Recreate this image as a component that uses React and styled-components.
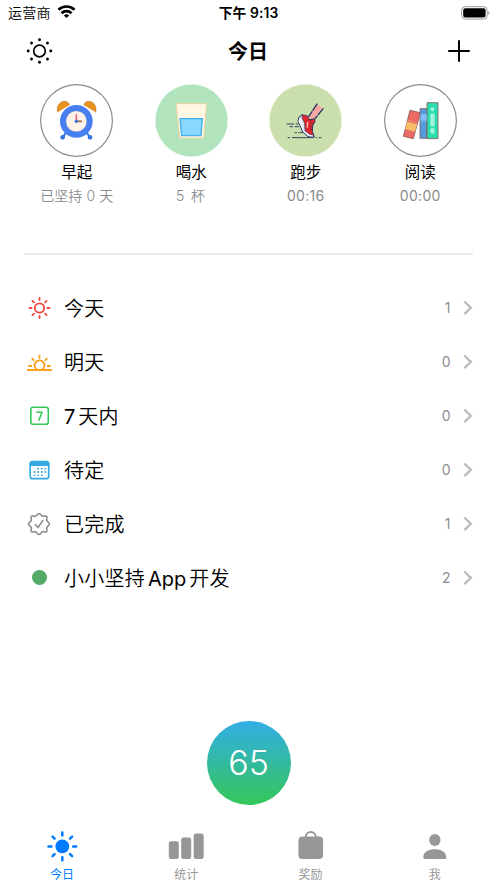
import React from "react";
import styled, { createGlobalStyle } from "styled-components";

const GlobalStyle = createGlobalStyle`
  * { box-sizing: border-box; }
  body { margin: 0; background: #fff; font-family: Inter, "Noto Sans CJK SC", sans-serif; color: #000; }
  svg { display: block; flex: none; overflow: visible; }
`;

const Screen = styled.main`
  width: 497px; height: 883px; display: flex; flex-direction: column; background: #fff; overflow: hidden;
`;
const StatusBar = styled.div`
  height: 26px; padding: 0 7px 0 8px; display: grid; grid-template-columns: 1fr auto 1fr; align-items: center;
  font-size: 14px; line-height: 26px; letter-spacing: 0.3px;
`;
const Carrier = styled.div`display: flex; align-items: center; gap: 6px; font-weight: 350;`;
const Clock = styled.div`font-weight: 600; font-size: 13.8px; letter-spacing: 0.1px; margin-right: 1px;`;
const BatterySlot = styled.div`display: flex; justify-content: flex-end; padding-bottom: 1px;`;
const NavBar = styled.header`
  height: 50px; padding: 0 27px 0 26px; display: grid; grid-template-columns: 1fr auto 1fr; align-items: center;
`;
const NavTitle = styled.h1`margin: 0; padding-top: 2px; font-size: 20px; line-height: 48px; font-weight: 600;`;
const NavEnd = styled.div`display: flex; justify-content: flex-end;`;

const Habits = styled.section`
  height: 177px; padding: 7.500px 19.500px 0 19.500px; display: grid; grid-template-columns: repeat(4, 1fr); align-items: start;
`;
const Habit = styled.div`display: flex; flex-direction: column; align-items: center;`;
const HabitCircle = styled.div`
  width: 73px; height: 73px; border-radius: 50%; background: ${(p) => p.$fill || "#fff"};
  box-shadow: ${(p) => (p.$fill ? "inset 0 0 0 .5px #fff" : "inset 0 0 0 1.2px #8b8b8b")};
`;
const HabitName = styled.div`margin-top: 4px; font-size: 15.5px; line-height: 24px;`;
const HabitInfo = styled.div`
  margin-top: -0.5px; font-size: 14px; line-height: 24px; font-weight: ${(p) => p.$weight || 400}; color: #8a8a8d;
  letter-spacing: ${(p) => p.$spacing || "0.3px"};
`;
const Divider = styled.hr`
  width: 449px; height: 2px; margin: 0 0 26px 24px; border: 0; background: #ececec; flex: none;
`;

const List = styled.nav`display: flex; flex-direction: column;`;
const Row = styled.div`height: 54px; padding: 0 25px 0 25px; display: flex; align-items: center;`;
const RowIcon = styled.div`width: 28px; height: 28px; flex: none;`;
const RowTitle = styled.div`
  margin-left: 11px; padding-top: 2px; flex: 1; display: flex; gap: 3px; font-size: 20px; line-height: 30px;
  font-weight: 350; letter-spacing: 0.25px;
`;
const Latin = styled.span`font-weight: 400; letter-spacing: 0;`;
const RowCount = styled.div`font-size: 14px; color: #8e8e91; margin-right: 12.5px; padding-bottom: 1px;`;
const Dot = styled.div`width: 15px; height: 15px; margin: 6px 7px; border-radius: 50%; background: #56aa68;`;

const ScoreArea = styled.div`flex: 1; display: flex; align-items: flex-end; justify-content: center; padding-bottom: 16.5px;`;
const Score = styled.div`
  width: 84px; height: 84px; border-radius: 50%; background: linear-gradient(#32ade6, #34c759);
  color: #fff; font-size: 34px; line-height: 84px; font-weight: 300; text-align: center;
`;
const TabBar = styled.footer`height: 62px; display: grid; grid-template-columns: repeat(4, 1fr);`;
const Tab = styled.div`
  display: flex; flex-direction: column; align-items: center; padding-top: 9px;
  color: ${(p) => (p.$active ? "#007aff" : "#979797")};
`;
const TabLabel = styled.div`margin-top: 4px; font-size: 12px; line-height: 18px;`;

const Rays = ({ inner, outer, cx = 14, cy = 14, angles = [0, 45, 90, 135, 180, 225, 270, 315] }) =>
  angles.map((a) => (
    <path key={a} transform={`rotate(${a} ${cx} ${cy})`} d={`M${cx + inner} ${cy}H${cx + outer}`} />
  ));

const Wifi = () => (
  <svg width="19" height="16" viewBox="0 0 19 16">
    <g fill="none" stroke="#000" strokeWidth="2.7">
      <path d="M1.5 4.8a11.3 11.3 0 0 1 16 0" />
      <path d="M4.5 8.2a7.1 7.1 0 0 1 10 0" />
    </g>
    <path d="M9.5 13 6.8 10.4a4 4 0 0 1 5.4 0Z" fill="#000" />
  </svg>
);
const Battery = () => (
  <svg width="29" height="14" viewBox="0 0 29 14">
    <rect x=".6" y=".7" width="25.6" height="12.4" rx="3.6" fill="none" stroke="#999" />
    <rect x="2.2" y="2.3" width="22.4" height="9.2" rx="2" fill="#000" />
    <path d="M27.4 5v4c1.5-.6 1.5-3.4 0-4Z" fill="#999" />
  </svg>
);
const DottedSun = () => (
  <svg width="27" height="28" viewBox="0 0 28 28">
    <circle cx="14" cy="14" r="6" fill="none" stroke="#000" strokeWidth="1.8" />
    {[0, 45, 90, 135, 180, 225, 270, 315].map((a) => (
      <circle key={a} cx="25.7" cy="14" r="1.5" transform={`rotate(${a} 14 14)`} />
    ))}
  </svg>
);
const Plus = () => (
  <svg width="22" height="22" viewBox="0 0 22 22">
    <path d="M11 1v20M1 11h20" stroke="#000" strokeWidth="2" strokeLinecap="round" />
  </svg>
);

const art = { width: 73, height: 73, viewBox: "30 23 219 219" };
const ClockArt = () => (
  <svg {...art}>
    <path d="M83 108c-5-18 6-33 21-33 9 0 14 6 14 12M197 108c5-18-6-33-21-33-9 0-14 6-14 12" fill="#e9921f" stroke="#ad6b36" strokeWidth="1.5" />
    <path d="m108 169-10 14M170 169l10 14" stroke="#3674e8" strokeWidth="6" />
    <circle cx="98" cy="183" r="7" fill="#3674e8" /><circle cx="180" cy="183" r="7" fill="#3674e8" />
    <circle cx="139" cy="135" r="49" fill="#477ff0" />
    <circle cx="139" cy="135" r="32" fill="#fff2e8" stroke="#356cda" strokeWidth="2" />
    <path d="M139 134v-20" stroke="#ed6674" strokeWidth="5" />
    <path d="M139 135h17" stroke="#9e633f" strokeWidth="5" />
    <circle cx="139" cy="135" r="5" fill="#3674e8" />
  </svg>
);
const GlassArt = () => (
  <svg {...art}>
    <path d="M93 82h92l-9 103h-72Z" fill="#fff7e3" stroke="#eed39d" strokeWidth="3" strokeLinejoin="round" />
    <path d="M105 127h67l-4 51h-58Z" fill="#8ad7ff" stroke="#3eb1f2" strokeWidth="4" />
  </svg>
);
const ShoeArt = () => (
  <svg {...art} viewBox="28 23 219 219">
    <path d="m170 83-25 39 13 13 33-39Z" fill="#f7aaa5" />
    <path d="m173 82-27 40m45-26-31 39" fill="none" stroke="#24355a" strokeWidth="4" strokeDasharray="26 2" />
    <path d="m128 115-10 7-3 12 14 33 16 14 19 1-6-16 1-19 7-12-3-7-19 3Z" fill="#e3e5f2" stroke="#24355a" strokeWidth="3" strokeLinejoin="round" />
    <path d="m129 115 14 3 7 14 14-4 2 8-7 11-1 18 4 12-12-3-14-11-1-22-8-17Z" fill="#e3262b" stroke="#24355a" strokeWidth="2" strokeLinejoin="round" />
    <path d="m120 126 5 10 5 26-13-27Z" fill="#f8f8fc" />
    <path d="m135 167 13 11 11 1" stroke="#f8f8fc" strokeWidth="3" fill="none" />
    <path d="m144 138-1 14" stroke="#ffc4c0" strokeWidth="4" strokeLinecap="round" />
    <path d="m153 141 7 1m-8 8 6 1m-6 8h6" stroke="#26365a" strokeWidth="2" />
    <path d="M81 143h22m5 0h8M90 151h10m5 0h13M105 169h7m4 0h14M84 184h7m6 0h66m5 0h4m5 0h8" stroke="#2e4267" strokeWidth="3" />
  </svg>
);
const BooksArt = () => (
  <svg {...art} viewBox="41 23 219 219">
    <g stroke="#885b59" strokeWidth="2.5" strokeLinejoin="round">
      <path d="m119 102 31 7-21 78-30-7Z" fill="#ed6a64" />
      <path d="M149 97h21v89h-21Z" fill="#559bdc" />
      <path d="M170 79h33v108h-33Z" fill="#29deb0" />
    </g>
    <path d="m110 136 30 8-6 22-30-8Z" fill="#f7bd69" />
    <path d="m112 132 29 8" stroke="#f0a77f" strokeWidth="2" />
    <path d="M151 113h18v20h-18Z" fill="#80bcf6" /><path d="M151 137h18" stroke="#80bcf6" strokeWidth="2" />
    <rect x="180" y="111" width="13" height="40" rx="6" fill="#a0f5da" />
    <circle cx="186" cy="99" r="6" fill="#a0f5da" /><rect x="180" y="155" width="13" height="17" rx="6" fill="#a0f5da" />
  </svg>
);

const line = { width: 28, height: 28, viewBox: "0 0 28 28", fill: "none", strokeLinecap: "round", strokeLinejoin: "round" };
const TodayIcon = () => (
  <svg {...line} stroke="#f2473f" strokeWidth="1.8">
    <circle cx="14.5" cy="14" r="4.7" /><Rays cx={14.5} inner={7.9} outer={10} />
  </svg>
);
const TomorrowIcon = () => (
  <svg {...line} stroke="#f99d16" strokeWidth="1.8">
    <path d="M2.8 22H26.2M11.700 21.500a5 5 0 1 1 5.600 0" />
    <Rays cx={14.5} cy={18} inner={8.2} outer={10.3} angles={[0, 180, 225, 270, 315]} />
  </svg>
);
const WeekIcon = () => (
  <svg {...line} stroke="#34c759" strokeWidth="1.6">
    <rect x="5.8" y="5.3" width="17.5" height="17" rx="2.3" />
    <path d="M12 10.300h5l-3 7.700" />
  </svg>
);
const CalendarIcon = () => (
  <svg {...line}>
    <rect x="5.2" y="5.7" width="18.5" height="17" rx="2.5" stroke="#36a9e1" strokeWidth="1.7" />
    <path d="M4.5 10V8a3 3 0 0 1 3-3h14a3 3 0 0 1 3 3v2Z" fill="#36a9e1" />
    <path d="M13 12.700h8.300M9.500 16h11.800M9.500 19.300h8.300" stroke="#36a9e1" strokeWidth="1.8" strokeDasharray=".1 3.5" />
  </svg>
);
const DoneIcon = () => (
  <svg {...line} stroke="#8e8e91" strokeWidth="1.6">
    <path d="M14 3.500c1.500 0 2 2.200 3.400 2.700 1.500.5 3.500-.7 4.300.1.800.8-.4 2.800.1 4.300.5 1.400 2.700 1.900 2.700 3.400s-2.200 2-2.700 3.400c-.5 1.500.7 3.500-.1 4.300-.8.8-2.800-.4-4.300.1-1.400.5-1.900 2.700-3.400 2.700s-2-2.200-3.400-2.700c-1.500-.5-3.500.7-4.300-.1-.8-.8.4-2.800-.1-4.300-.5-1.400-2.700-1.900-2.700-3.400s2.200-2 2.700-3.400c.5-1.500-.7-3.500.1-4.300.8-.8 2.800.4 4.300-.1C12 5.700 12.500 3.500 14 3.500Z" />
    <path d="m10.300 14.500 2.700 3 4.800-7" />
  </svg>
);
const Chevron = () => (
  <svg width="9" height="16" viewBox="0 0 9 16">
    <path d="m1.300 1.500 6.500 6.300-6.500 6.300" fill="none" stroke="#bdbdbd" strokeWidth="2.4" />
  </svg>
);
const SunTab = () => (
  <svg width="32" height="32" viewBox="0 0 32 32" fill="#007aff" stroke="#007aff" strokeWidth="2.5" strokeLinecap="round">
    <circle cx="16.3" cy="16.4" r="6.9" stroke="none" /><Rays cx={16.3} cy={16.4} inner={10.9} outer={13.8} />
  </svg>
);
const StatsTab = () => (
  <svg width="36" height="32" viewBox="0 0 36 32" fill="currentColor">
    <rect x=".8" y="11.3" width="10" height="17.7" rx="2.3" /><rect x="13.2" y="7.5" width="10" height="21.5" rx="2.3" /><rect x="25.7" y="3.5" width="10" height="25.5" rx="2.3" />
  </svg>
);
const BagTab = () => (
  <svg width="26" height="32" viewBox="0 0 26 32">
    <rect x=".4" y="6.5" width="24.7" height="22.5" rx="4" fill="currentColor" />
    <path d="M7.8 7a5 5 0 0 1 10 0" fill="none" stroke="currentColor" strokeWidth="1.9" />
  </svg>
);
const PersonTab = () => (
  <svg width="24" height="32" viewBox="0 0 24 32" fill="currentColor">
    <rect x="6.2" y="4" width="11.3" height="12" rx="5.65" />
    <path d="M.3 27c0-10.400 23-10.400 23 0 0 1.400-.7 2-2 2h-19c-1.300 0-2-.6-2-2Z" />
  </svg>
);

const habits = [
  { name: "早起", info: "已坚持 0 天", spacing: "0.1px", weight: 350, Art: ClockArt },
  { name: "喝水", info: "5 杯", spacing: "1.4px", weight: 350, fill: "#b1e4bc", Art: GlassArt },
  { name: "跑步", info: "00:16", fill: "#cbdfad", Art: ShoeArt },
  { name: "阅读", info: "00:00", Art: BooksArt },
];
const lists = [
  { title: ["今天"], count: 1, Icon: TodayIcon },
  { title: ["明天"], count: 0, Icon: TomorrowIcon },
  { title: ["7", "天内"], count: 0, Icon: WeekIcon },
  { title: ["待定"], count: 0, Icon: CalendarIcon },
  { title: ["已完成"], count: 1, Icon: DoneIcon },
  { title: ["小小坚持", "App", "开发"], count: 2, Icon: Dot },
];
const tabs = [
  { label: "今日", Icon: SunTab, active: true },
  { label: "统计", Icon: StatsTab },
  { label: "奖励", Icon: BagTab },
  { label: "我", Icon: PersonTab },
];

const TitlePart = ({ text }) => (/^\w+$/.test(text) ? <Latin>{text}</Latin> : <span>{text}</span>);

export default function App() {
  return (
    <Screen>
      <GlobalStyle />
      <StatusBar>
        <Carrier>运营商 <Wifi /></Carrier>
        <Clock>下午 9:13</Clock>
        <BatterySlot><Battery /></BatterySlot>
      </StatusBar>
      <NavBar>
        <DottedSun />
        <NavTitle>今日</NavTitle>
        <NavEnd><Plus /></NavEnd>
      </NavBar>
      <Habits>
        {habits.map(({ name, info, fill, spacing, weight, Art }) => (
          <Habit key={name}>
            <HabitCircle $fill={fill}><Art /></HabitCircle>
            <HabitName>{name}</HabitName>
            <HabitInfo $spacing={spacing} $weight={weight}>{info}</HabitInfo>
          </Habit>
        ))}
      </Habits>
      <Divider />
      <List>
        {lists.map(({ title, count, Icon }) => (
          <Row key={title.join("")}>
            <RowIcon><Icon /></RowIcon>
            <RowTitle>{title.map((part) => <TitlePart key={part} text={part} />)}</RowTitle>
            <RowCount>{count}</RowCount>
            <Chevron />
          </Row>
        ))}
      </List>
      <ScoreArea><Score>65</Score></ScoreArea>
      <TabBar>
        {tabs.map(({ label, Icon, active }) => (
          <Tab key={label} $active={active}><Icon /><TabLabel>{label}</TabLabel></Tab>
        ))}
      </TabBar>
    </Screen>
  );
}
